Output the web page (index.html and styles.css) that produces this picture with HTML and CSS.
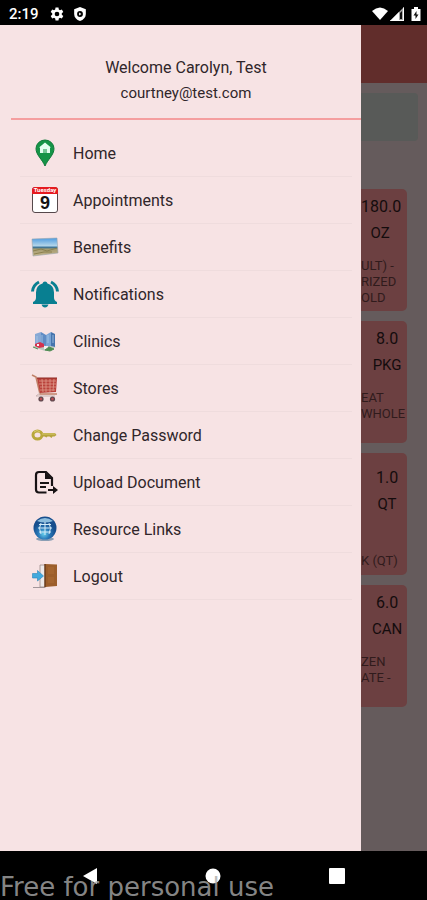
FILE: index.html
```html
<!DOCTYPE html>
<html lang="en">
<head>
<meta charset="utf-8">
<meta name="viewport" content="width=device-width, initial-scale=1">
<title>Menu</title>
<link rel="stylesheet" href="styles.css">
</head>
<body>
<header class="status">
  <span class="clock">2:19</span>
  <svg class="status-icon" viewBox="0 0 24 24" fill="#fff"><path fill-rule="evenodd" d="M9.5 1h5l.6 3.3 2 1.2 3.200-1.200 2.500 4.300-2.600 2.200v2.400l2.600 2.200-2.500 4.300-3.200-1.200-2 1.200-.6 3.300h-5l-.6-3.300-2-1.200-3.200 1.200-2.500-4.300 2.600-2.200v-2.400L1.200 8.600l2.500-4.300 3.200 1.200 2-1.200zM12 8a4 4 0 1 0 0 8 4 4 0 0 0 0-8z"/></svg>
  <svg class="status-icon shield" viewBox="0 0 24 24" fill="#fff"><path fill-rule="evenodd" d="M12 0l10 4v8c0 6-4 10-10 12C6 22 2 18 2 12V4zM12 7a5 5 0 1 0 0 10 5 5 0 0 0 0-10zM10.500 9.500l4 2.500-4 2.500z"/></svg>
  <span class="status-right">
    <svg width="16" height="14" viewBox="0 0 16 14" fill="#fff"><path d="M0 4Q8-3 16 4L8 13z"/></svg>
    <svg width="15" height="14" viewBox="0 0 15 14"><path d="M14 0v14H0z" fill="#aaa"/><path d="M9 5v9H0z" fill="#fff"/><path d="M10 6l2-2v8h-2z" fill="#111"/><path d="M13 1l1-1v14H0l1-1h12z" fill="#fff"/></svg>
    <svg width="10" height="14" viewBox="0 0 10 14"><path d="M3 0h4v2h2.500v12h-9V2H3z" fill="#fff"/><path d="M5.500 4L2.500 8.500h2V12l3-4.500h-2z" fill="#111"/></svg>
  </span>
</header>

<main class="stage">
  <nav class="drawer" aria-label="Main menu">
    <div class="profile">
      <p class="welcome">Welcome Carolyn, Test</p>
      <p class="email">courtney@test.com</p>
    </div>
    <ul class="menu">
      <li><a href="#home">
        <svg class="icon" viewBox="0 0 28 28"><path d="M14 27C11 20 5 16 5 9.500a9 8.500 0 0 1 18 0C23 16 17 20 14 27z" fill="#159447" stroke="#0e7938"/><path d="M14 3.500l6 5h-1V14H9V8.500H8z" fill="#e4fff0"/><path d="M12 14v-4h4v4z" fill="#74c795"/></svg>Home</a></li>
      <li><a href="#appointments">
        <svg class="icon" viewBox="0 0 28 28"><rect x="1.500" y="1.500" width="25" height="25" rx="2.500" fill="#fff" stroke="#55484b"/><path d="M1 8V4q0-3 3-3h20q3 0 3 3v4z" fill="#e51b20"/><text x="14" y="6" class="cal-month">Tuesday</text><text x="14" y="23" class="cal-day">9</text></svg>Appointments</a></li>
      <li><a href="#benefits">
        <svg class="icon" viewBox="0 0 28 28"><defs><linearGradient id="sky" x2="0" y2="1"><stop offset="0" stop-color="#4d9be0"/><stop offset=".45" stop-color="#b8d8ea"/><stop offset=".5" stop-color="#286a9b"/><stop offset=".62" stop-color="#a49b71"/><stop offset="1" stop-color="#c5b58a"/></linearGradient></defs><path d="M1 6l25-1 1 15-25 3z" fill="url(#sky)" stroke="#9aa6ae" stroke-width=".6"/><path d="M2 18l8-2 6 2 10-3M3 21l10-2 8 0" stroke="#8a8150" fill="none"/></svg>Benefits</a></li>
      <li><a href="#notifications">
        <svg class="icon" viewBox="0 0 28 28"><path d="M14 1.500q2 0 2.500 2 6.500 2 6.500 9v5q0 3 3 4.500v2H2v-2q3-1.500 3-4.500v-5q0-7 6.500-9 .5-2 2.500-2zM10.500 24.500h7q-1 3-3.500 3t-3.500-3z" fill="#087f91"/><path d="M8 2Q2 5 1.500 11.500M20 2q6 3 6.500 9.500" stroke="#087f91" stroke-width="3" fill="none"/></svg>Notifications</a></li>
      <li><a href="#clinics">
        <svg class="icon" viewBox="0 0 28 28"><path d="M2 20l7-4 16 4-11 4z" fill="#bcc7bd"/><path d="M4 7l6-2v13l-6 1z" fill="#87a9d5"/><path d="M10 5l5 3v11l-5-1z" fill="#5f8cc4"/><path d="M15 8l5-3v14l-5 1z" fill="#79a4d5"/><path d="M20 5l4 2v13l-4-1z" fill="#4674ad"/><path d="M11 8v8M17 8v8M22 8v8M6 9v7" stroke="#a9cae9" stroke-width=".8"/><path d="M4 17l5-2 4 2v3l-5 1-4-2z" fill="#d4324e"/><path d="M6 17h2v2H6zM13 19h4v3h-4z" fill="#f4f0f0"/><path d="M2 20l5 2M14 23l4-3 5 2-4 2z" stroke="#4f8c54" fill="#4d8d4f"/></svg>Clinics</a></li>
      <li><a href="#stores">
        <svg class="icon" viewBox="0 0 28 28"><path d="M1 1l4 2 4 17h17" fill="none" stroke="#c18269" stroke-width="1.600"/><path d="M6 4h20l-1 14-16 1z" fill="#b9423b"/><path d="M8 7h17M8 10h17M9 13h16M9 16h15M11 5l1 13M15 5v13M19 5v13M23 5l-1 12" stroke="#df9a8b" stroke-width=".8"/><path d="M6 4h20" stroke="#8e2823"/><path d="M9 19l-4 3h19" stroke="#c8b4b3" fill="none"/><circle cx="10" cy="25" r="2.600" fill="#634b50"/><circle cx="21.500" cy="25" r="2.600" fill="#634b50"/><circle cx="10" cy="25" r="1.200" fill="#c14a53"/><circle cx="21.500" cy="25" r="1.200" fill="#c14a53"/></svg>Stores</a></li>
      <li><a href="#password">
        <svg class="icon" viewBox="0 0 28 28"><ellipse cx="6.500" cy="14" rx="4.500" ry="4" fill="none" stroke="#b9a83b" stroke-width="3"/><path d="M11 12h13l1.500 2-2 1.500h-2l-1 1.500-2-1.500h-2l-1 1-2-1H11z" fill="#b6a43d"/><path d="M11 13h13M3 11q3-3 6 0" stroke="#e0d47b" stroke-width=".8" fill="none"/></svg>Change Password</a></li>
      <li><a href="#upload">
        <svg class="icon" viewBox="0 0 28 28"><path d="M15.500 24.500H8q-3 0-3-3V7q0-3 3-3h7l6 6v8" fill="none" stroke="#171214" stroke-width="2.200"/><path d="M14 4v7h7z" fill="#171214"/><path d="M9 15h9M9 19h6" stroke="#171214" stroke-width="1.800"/><path d="M17 22h7" stroke="#171214" stroke-width="2"/><path d="M22 18l5 4-5 4z" fill="#171214"/></svg>Upload Document</a></li>
      <li><a href="#links">
        <svg class="icon" viewBox="0 0 28 28"><defs><radialGradient id="globe" cx=".45" cy=".75"><stop offset="0" stop-color="#69d1ed"/><stop offset=".5" stop-color="#2878b8"/><stop offset="1" stop-color="#174e8d"/></radialGradient></defs><ellipse cx="14" cy="24" rx="9" ry="2" fill="#8a9eb4"/><circle cx="14" cy="13" r="11.500" fill="url(#globe)"/><path d="M6 6q8-6 16 0-8 3-16 0z" fill="#8cbddd"/><path d="M14 7v13M7 13h14M8 9.500h12M8 17h12M10 8q-3 5 0 11M18 8q3 5 0 11" stroke="#d6edf8" fill="none"/></svg>Resource Links</a></li>
      <li><a href="#logout">
        <svg class="icon" viewBox="0 0 28 28"><path d="M2 25.500h12" stroke="#a2969a"/><path d="M9 3h6v22H9z" fill="#ede9e9" stroke="#9c8b89" stroke-width=".8"/><path d="M14 2l12 .5V24l-12 1z" fill="#9c5e2b"/><path d="M14 2v23" stroke="#683c1e" stroke-width="1.500"/><path d="M17 5h6v7h-6zM17 15h6v6h-6z" fill="#a46530"/><path d="M1.500 11.500h5v-3l6 5.500-6 5v-3h-5z" fill="#41a9dd" stroke="#2685b9" stroke-width=".6"/></svg>Logout</a></li>
    </ul>
  </nav>

  <section class="peek" aria-label="Items">
    <div class="appbar"></div>
    <div class="search"></div>
    <div class="cards">
      <article class="card"><p class="amount">180.0</p><p class="unit">OZ</p><p class="desc">ULT) -<br>RIZED<br>OLD</p></article>
      <article class="card"><p class="amount near">8.0</p><p class="unit near">PKG</p><p class="desc">EAT<br>WHOLE</p></article>
      <article class="card tall"><p class="amount near">1.0</p><p class="unit near">QT</p><p class="desc">K (QT)</p></article>
      <article class="card"><p class="amount near">6.0</p><p class="unit near">CAN</p><p class="desc">ZEN<br>ATE -</p></article>
    </div>
  </section>
</main>

<footer class="navbar">
  <button aria-label="Back"><svg width="16" height="18" viewBox="0 0 16 18"><path d="M15 1v16L1 9z" fill="#fff"/></svg></button>
  <button aria-label="Home"><svg width="16" height="16" viewBox="0 0 16 16"><circle cx="8" cy="8" r="7.500" fill="#fff"/></svg></button>
  <button aria-label="Recent apps"><svg width="16" height="16" viewBox="0 0 16 16"><rect width="16" height="16" rx="1" fill="#fff"/></svg></button>
  <span class="watermark">Free for personal use</span>
</footer>
</body>
</html>
```

FILE: styles.css
```css
* { box-sizing: border-box; }

body {
  margin: 0;
  min-height: 100vh;
  display: grid;
  grid-template-rows: auto 1fr auto;
  background: #000;
  color: #30262a;
  font-family: Roboto, "Liberation Sans", sans-serif;
}

p, ul { margin: 0; padding: 0; }

.status {
  display: flex;
  align-items: center;
  height: 25px;
  padding: 2px 6px 0 9px;
  color: #fff;
}
.clock { font-size: 15px; font-weight: 500; margin-right: 11px; }
.status-icon { width: 14px; height: 14px; }
.shield { margin-left: 9px; }
.status-right { display: flex; align-items: center; gap: 2px; margin-left: auto; }
.status-right svg:last-child { margin-left: 4px; }

.stage {
  display: grid;
  grid-template-columns: 1fr 66px;
}

.drawer { background: #f7e3e4; }
.profile {
  margin-left: 11px;
  padding: 30px 0 13px;
  border-bottom: 2px solid #f59e9f;
  text-align: center;
}
.welcome { font-size: 16px; line-height: 26px; }
.email { font-size: 15px; line-height: 24px; }

.menu { list-style: none; padding: 10px 9px 0 20px; }
.menu li { border-bottom: 1px solid #efdcdd; }
.menu a {
  display: flex;
  align-items: center;
  gap: 14px;
  height: 46px;
  padding-left: 11px;
  color: inherit;
  font-size: 16px;
  text-decoration: none;
}
.icon { width: 28px; height: 28px; }
.cal-month { font: bold 6px Roboto, sans-serif; fill: #fff; text-anchor: middle; }
.cal-day { font: bold 18px "Liberation Sans", sans-serif; fill: #161314; text-anchor: middle; }

.peek { background: #655b5c; overflow: hidden; }
.appbar { height: 58px; background: #612d2b; }
.search {
  height: 48px;
  margin: 10px 9px 0 0;
  background: #585a58;
  border-radius: 0 4px 4px 0;
}
.cards { display: grid; gap: 10px; margin: 48px 20px 0 0; }
.card {
  height: 122px;
  padding-top: 5px;
  background: #6c4041;
  border-radius: 0 5px 5px 0;
  color: #140c0d;
  text-align: center;
  white-space: nowrap;
}
.amount { font-size: 16px; line-height: 26px; padding-right: 6px; }
.unit { font-size: 15px; line-height: 26px; padding-right: 8px; }
.near { padding-left: 6px; padding-right: 0; }
.desc { padding-top: 12px; font-size: 13px; line-height: 16px; color: #301b1c; text-align: left; }
.tall { padding-top: 12px; }
.tall .desc { padding-top: 36px; }

.navbar {
  position: relative;
  display: grid;
  grid-template-columns: repeat(3, 1fr);
  height: 49px;
  padding: 0 28px;
}
.navbar button {
  display: grid;
  place-items: center;
  padding: 0;
  border: 0;
  background: none;
}
.watermark {
  position: absolute;
  left: 0;
  bottom: 0;
  font: 26px/26px "DejaVu Sans", sans-serif;
  color: #aaac;
  white-space: nowrap;
  pointer-events: none;
}
```
